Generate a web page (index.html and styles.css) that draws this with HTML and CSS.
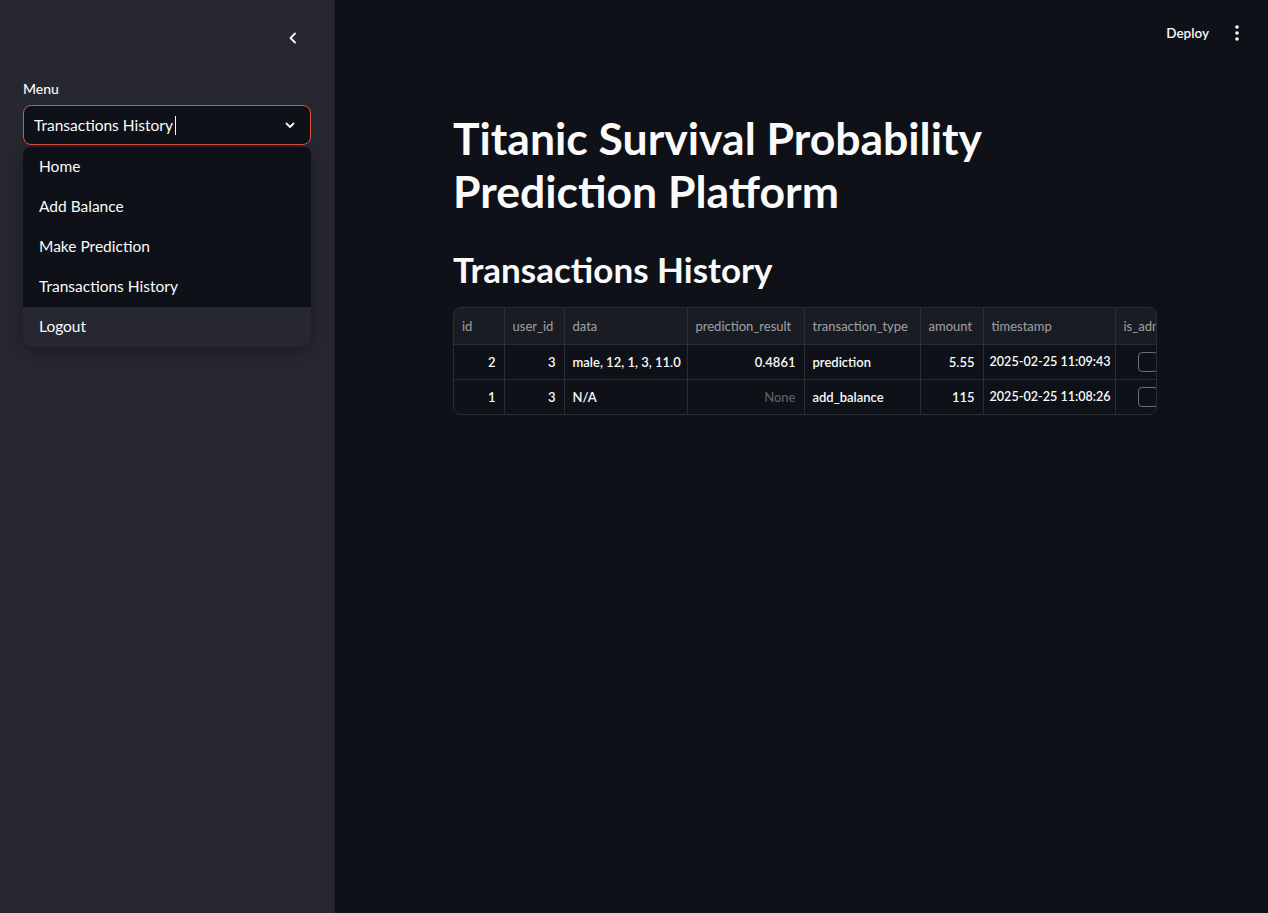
FILE: index.html
```html
<!DOCTYPE html>
<html lang="en">
<head>
<meta charset="utf-8">
<title>Titanic Survival Probability Prediction Platform</title>
<link rel="stylesheet" href="styles.css">
</head>
<body>
<div class="app">
  <aside class="sidebar">
    <div class="sidebar-top">
      <button class="collapse-btn" aria-label="Collapse sidebar">
        <svg width="16" height="16" viewBox="0 0 16 16"><path d="M10 3.5 L5.5 8 L10 12.5" fill="none" stroke="#fafafa" stroke-width="1.8" stroke-linecap="round" stroke-linejoin="round"/></svg>
      </button>
    </div>
    <div class="widget">
      <label class="widget-label">Menu</label>
      <div class="select-wrap">
        <div class="select">
          <span class="select-value">Transactions History</span><span class="caret"></span>
          <svg class="select-arrow" width="16" height="16" viewBox="0 0 16 16"><path d="M4.5 6.5 L8 10 L11.5 6.5" fill="none" stroke="#fafafa" stroke-width="1.8" stroke-linecap="round" stroke-linejoin="round"/></svg>
        </div>
        <ul class="dropdown">
          <li class="option">Home</li>
          <li class="option">Add Balance</li>
          <li class="option">Make Prediction</li>
          <li class="option">Transactions History</li>
          <li class="option hovered">Logout</li>
        </ul>
      </div>
    </div>
  </aside>
  <main class="main">
    <header class="toolbar">
      <span class="deploy">Deploy</span>
      <button class="kebab" aria-label="Main menu">
        <svg width="6" height="18" viewBox="0 0 6 18"><circle cx="3" cy="3" r="1.8" fill="#fafafa"/><circle cx="3" cy="9" r="1.8" fill="#fafafa"/><circle cx="3" cy="15" r="1.8" fill="#fafafa"/></svg>
      </button>
    </header>
    <section class="content">
      <h1 class="title">Titanic Survival Probability Prediction Platform</h1>
      <h2 class="subtitle">Transactions History</h2>
      <div class="table-frame">
        <table class="grid">
          <colgroup>
            <col class="c-id"><col class="c-user"><col class="c-data"><col class="c-pred"><col class="c-type"><col class="c-amount"><col class="c-ts"><col class="c-admin">
          </colgroup>
          <thead>
            <tr>
              <th>id</th><th>user_id</th><th>data</th><th>prediction_result</th><th>transaction_type</th><th>amount</th><th>timestamp</th><th>is_admin</th>
            </tr>
          </thead>
          <tbody>
            <tr>
              <td class="num">2</td><td class="num">3</td><td>male, 12, 1, 3, 11.0</td><td class="num">0.4861</td><td>prediction</td><td class="num">5.55</td><td>2025-02-25 11:09:43</td><td class="chk"><span class="checkbox"></span></td>
            </tr>
            <tr>
              <td class="num">1</td><td class="num">3</td><td>N/A</td><td class="num muted">None</td><td>add_balance</td><td class="num">115</td><td>2025-02-25 11:08:26</td><td class="chk"><span class="checkbox"></span></td>
            </tr>
          </tbody>
        </table>
      </div>
    </section>
  </main>
</div>
</body>
</html>
```

FILE: styles.css
```css
* { box-sizing: border-box; }
html, body {
  margin: 0;
  padding: 0;
  height: 100%;
}
body {
  background: #0e1117;
  color: #fafafa;
  font-family: Lato, "Noto Sans", sans-serif;
}
.app {
  display: flex;
  height: 913px;
  overflow: hidden;
}
.sidebar {
  width: 335px;
  flex: none;
  background: #262730;
  border-right: 1px solid #1d1e26;
  padding: 0 24px 0 23px;
}
.sidebar-top {
  height: 74px;
  display: flex;
  justify-content: flex-end;
  align-items: flex-start;
  padding-top: 30px;
  padding-right: 9px;
}
.collapse-btn {
  background: none;
  border: none;
  padding: 0;
  width: 16px;
  height: 16px;
  display: flex;
}
.widget-label {
  display: block;
  font-size: 14px;
  line-height: 20px;
  height: 31px;
  padding-top: 5px;
  font-weight: 500;
}
.select-wrap {
  position: relative;
  width: 288px;
}
.select {
  height: 40px;
  border: 1px solid #e0533f;
  border-radius: 8px;
  background: #0e1117;
  display: flex;
  align-items: center;
  padding: 0 12px 0 10px;
  font-size: 15.5px;
}
.select-value { white-space: nowrap; }
.caret {
  width: 1.5px;
  height: 19px;
  background: #fafafa;
  margin-left: 2px;
}
.select-arrow { margin-left: auto; }
.dropdown {
  position: absolute;
  top: 42px;
  left: 0;
  right: 0;
  margin: 0;
  padding: 0;
  list-style: none;
  background: #0e1117;
  border-radius: 8px;
  overflow: hidden;
  box-shadow: 0 4px 16px rgba(0, 0, 0, 0.3);
}
.option {
  height: 40px;
  display: flex;
  align-items: center;
  padding: 0 0 2px 16px;
  font-size: 15.5px;
}
.option.hovered { background: #262730; }

.main {
  flex: 1;
  display: flex;
  flex-direction: column;
}
.toolbar {
  height: 66px;
  display: flex;
  justify-content: flex-end;
  align-items: center;
  padding-right: 28px;
  gap: 25px;
}
.deploy {
  font-size: 13.5px;
  font-weight: 600;
}
.kebab {
  background: none;
  border: none;
  padding: 0;
  display: flex;
}
.content {
  padding: 45px 0 0 118px;
  width: 822px;
}
.title {
  margin: 0;
  font-size: 44.5px;
  line-height: 53px;
  font-weight: 700;
  width: 560px;
}
.subtitle {
  margin: 30px 0 0;
  font-size: 35px;
  line-height: 44px;
  font-weight: 700;
}
.table-frame {
  margin-top: 16px;
  width: 704px;
  border: 1px solid #2b2d35;
  border-radius: 8px;
  overflow: hidden;
}
.grid {
  border-collapse: collapse;
  table-layout: fixed;
  width: 770px;
  font-size: 13px;
}
.c-id { width: 50px; }
.c-user { width: 60px; }
.c-data { width: 123px; }
.c-pred { width: 117px; }
.c-type { width: 116px; }
.c-amount { width: 63px; }
.c-ts { width: 132px; }
.c-admin { width: 109px; }
.grid th, .grid td {
  border-right: 1px solid #2b2d35;
  border-bottom: 1px solid #2b2d35;
  padding: 0 8px;
  white-space: nowrap;
  overflow: hidden;
  text-align: left;
}
.grid th {
  height: 36px;
  background: #1a1c24;
  color: rgba(250, 250, 250, 0.6);
  font-weight: 400;
}
.grid td {
  height: 35px;
  font-weight: 600;
}
.grid td.ts { font-size: 12.6px; }
.grid tbody tr:last-child td { border-bottom: none; }
.grid td.num { text-align: right; }
.grid td.muted { color: rgba(250, 250, 250, 0.35); font-weight: 500; }
.grid td:nth-child(7) { font-size: 12.6px; padding: 0 6px; }
.grid td.chk { padding-left: 22px; }
.checkbox {
  display: block;
  width: 20px;
  height: 20px;
  border: 1px solid #6b6d75;
  border-radius: 4px;
}
```
